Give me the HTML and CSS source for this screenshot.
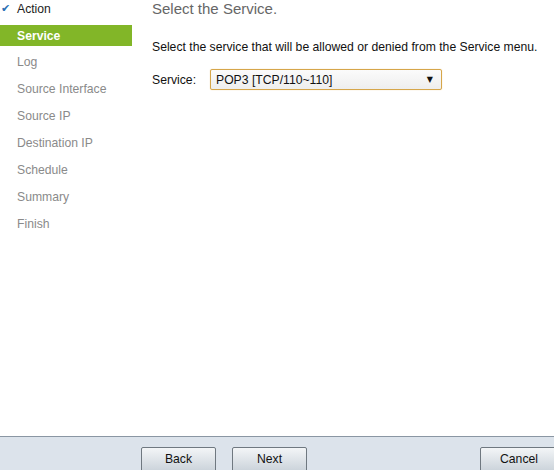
FILE: index.html
```html
<!DOCTYPE html>
<html>
<head>
<meta charset="utf-8">
<link rel="stylesheet" href="styles.css">
</head>
<body>
<div class="page">
  <div class="main">
    <nav class="steps">
      <div class="step done"><span class="check">&#10004;</span>Action</div>
      <div class="step active">Service</div>
      <div class="step">Log</div>
      <div class="step">Source Interface</div>
      <div class="step">Source IP</div>
      <div class="step">Destination IP</div>
      <div class="step">Schedule</div>
      <div class="step">Summary</div>
      <div class="step">Finish</div>
    </nav>
    <section class="content">
      <h1 class="title">Select the Service.</h1>
      <p class="desc">Select the service that will be allowed or denied from the Service menu.</p>
      <div class="field">
        <label class="label">Service:</label>
        <div class="select"><span>POP3 [TCP/110~110]</span><span class="arrow">&#9660;</span></div>
      </div>
    </section>
  </div>
  <footer class="footer">
    <div class="left-btns">
      <button class="btn">Back</button>
      <button class="btn">Next</button>
    </div>
    <button class="btn cancel">Cancel</button>
  </footer>
</div>
</body>
</html>
```
FILE: styles.css
```css
html, body {
  margin: 0;
  padding: 0;
  background: #fff;
  font-family: "Liberation Sans", Arial, sans-serif;
  overflow: hidden;
}
.page {
  width: 554px;
  height: 470px;
  display: flex;
  flex-direction: column;
}
.main {
  flex: 1;
  display: flex;
}
.steps {
  width: 132px;
  display: flex;
  flex-direction: column;
}
.step {
  height: 27px;
  line-height: 18px;
  padding-left: 17px;
  font-size: 12.2px;
  color: #8a8a8a;
  position: relative;
  box-sizing: border-box;
}
.step.done {
  color: #222;
  height: 25px;
}
.check {
  position: absolute;
  left: 1px;
  top: 0;
  color: #2a6fb4;
  font-size: 11px;
  font-family: "DejaVu Sans", sans-serif;
}
.step.active {
  background: #82b628;
  color: #fff;
  font-weight: bold;
  height: 21px;
  line-height: 22px;
  margin-bottom: 7px;
}
.content {
  padding-left: 20px;
  flex: 1;
}
.title {
  margin: 0;
  font-size: 15px;
  font-weight: normal;
  color: #666;
  line-height: 18px;
}
.desc {
  margin: 21px 0 0 0;
  font-size: 12.2px;
  line-height: 16px;
  color: #111;
}
.field {
  display: flex;
  align-items: center;
  margin-top: 14px;
}
.label {
  font-size: 12.2px;
  color: #111;
  width: 58px;
}
.select {
  width: 232px;
  height: 21px;
  box-sizing: border-box;
  border: 1px solid #d6a64a;
  border-radius: 2px;
  background: linear-gradient(#fbfbfb, #eeeeee);
  box-shadow: 0 0 1px #e8c27a;
  display: flex;
  align-items: center;
  justify-content: space-between;
  padding: 0 8px 0 5px;
  font-size: 12.2px;
  color: #111;
}
.arrow {
  font-size: 8px;
  font-family: "DejaVu Sans", sans-serif;
}
.footer {
  height: 34px;
  box-sizing: border-box;
  border-top: 1px solid #8a96a3;
  background: #dce3eb;
  display: flex;
  align-items: flex-start;
  justify-content: space-between;
  padding: 10px 0 0 141px;
}
.left-btns {
  display: flex;
  gap: 16px;
}
.btn {
  width: 75px;
  height: 26px;
  margin: 0;
  padding: 0 0 3px 0;
  border: 1px solid #6f7880;
  border-radius: 2px;
  background: linear-gradient(#f3f5f7, #c9d1d9);
  font-family: "Liberation Sans", Arial, sans-serif;
  font-size: 12.2px;
  color: #111;
}
.btn.cancel {
  width: 78px;
  margin-right: -4px;
}
```
